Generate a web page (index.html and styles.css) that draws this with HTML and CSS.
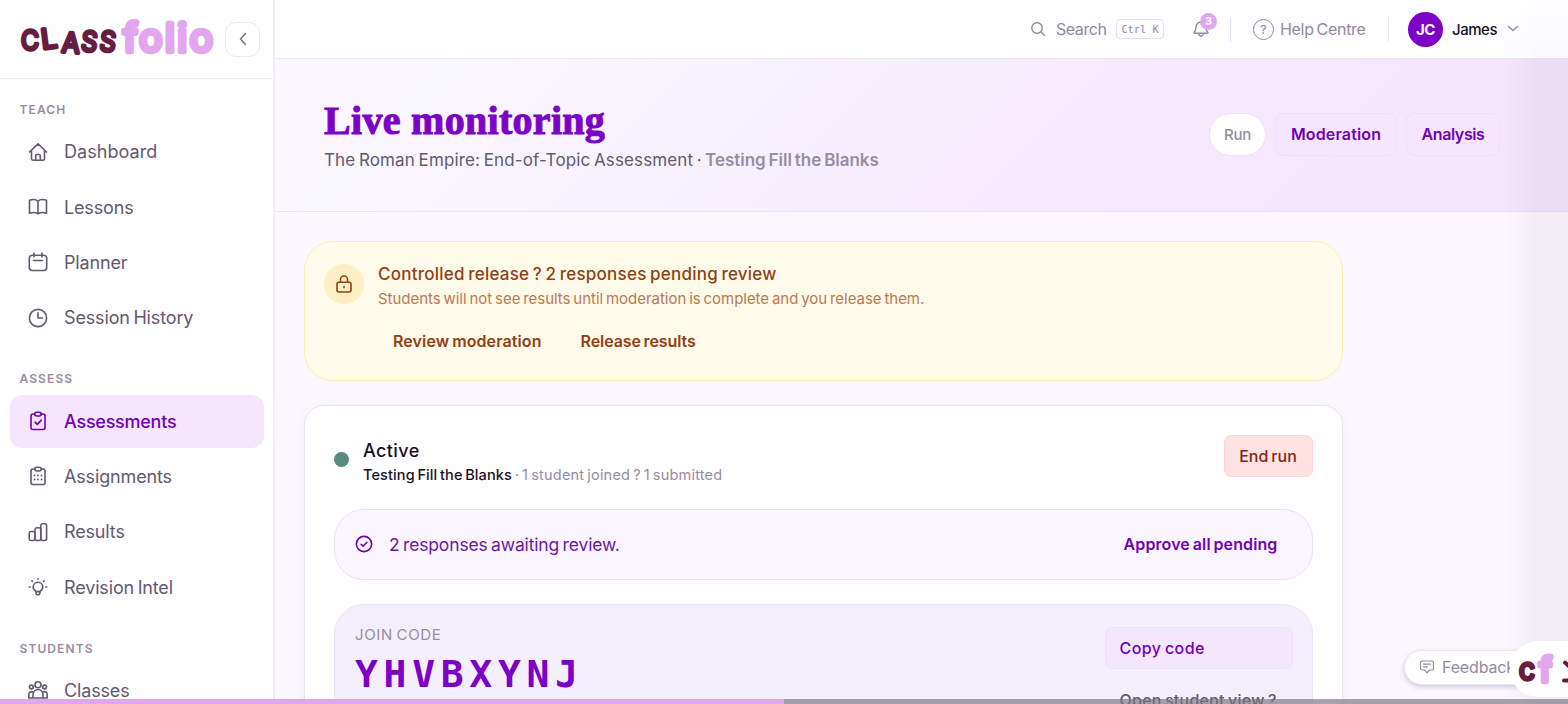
FILE: index.html
```html
<!DOCTYPE html>
<html lang="en">

<head>
  <meta charset="UTF-8">
  <meta name="viewport" content="width=device-width, initial-scale=1.0">
  <title>Live monitoring</title>
  <link rel="stylesheet" href="styles.css">
</head>

<body>

  <div class="app">

    <!-- Sidebar -->
    <aside class="sidebar">
      <div class="brand">
        <svg class="logo" width="196" height="44" viewBox="0 0 196 44">
          <g class="logo-class">
            <text x="2" y="32.500" textLength="18" lengthAdjust="spacingAndGlyphs">C</text>
            <text x="23" y="31.500" textLength="16" lengthAdjust="spacingAndGlyphs" transform="rotate(-7 30 30)">L</text>
            <text x="42.500" y="35.500" textLength="18" lengthAdjust="spacingAndGlyphs" transform="rotate(4 50 30)">A</text>
            <text x="62.500" y="34" textLength="16" lengthAdjust="spacingAndGlyphs" transform="rotate(6 69 24)">S</text>
            <text x="81" y="34" textLength="16" lengthAdjust="spacingAndGlyphs" transform="rotate(6 88 24)">S</text>
          </g>
          <text class="logo-folio" x="104" y="35" textLength="90" lengthAdjust="spacing">folio</text>
        </svg>
        <button class="collapse" aria-label="Collapse">
          <svg width="18" height="18" viewBox="0 0 18 18"><path d="M11.500 3.500 6.500 9l5 5.500" /></svg>
        </button>
      </div>

      <nav class="nav">
        <div class="nav-group">
          <h4>TEACH</h4>
          <a class="nav-item"><svg viewBox="0 0 20 20"><path d="M1.500 10 10 1.800l8.500 8.200M3.500 8.500v8a1.700 1.700 0 0 0 1.700 1.700h9.600a1.700 1.700 0 0 0 1.700-1.700v-8M7.700 18v-4.500a1 1 0 0 1 1-1h2.600a1 1 0 0 1 1 1V18" /></svg><span class="spaced">Dashboard</span></a>
          <a class="nav-item"><svg viewBox="0 0 20 20"><path d="M10 4.200C8 2.300 4.500 2.300 1.500 3.200v13c3-.9 6.500-.7 8.500.6 2-1.300 5.500-1.500 8.500-.6v-13c-3-.9-6.500-.9-8.500 1zm0 0v12.600" /></svg><span>Lessons</span></a>
          <a class="nav-item"><svg viewBox="0 0 20 20"><rect x="1.300" y="3.300" width="17.400" height="15.200" rx="3" /><path d="M6 1v4M14 1v4M5.500 8.500h9" /></svg><span>Planner</span></a>
          <a class="nav-item"><svg viewBox="0 0 20 20"><circle cx="10" cy="10" r="8.600" /><path d="M10 4.800V10h4.600" /></svg><span>Session History</span></a>
        </div>

        <div class="nav-group">
          <h4>ASSESS</h4>
          <a class="nav-item active"><svg viewBox="0 0 20 20"><path d="M6.800 3H5a2 2 0 0 0-2 2v11.500a2 2 0 0 0 2 2h10a2 2 0 0 0 2-2V5a2 2 0 0 0-2-2h-1.800M7 11.200l2.300 2.200 4-4.300" /><rect x="6.800" y="1.200" width="6.400" height="3.800" rx="1.900" /></svg><span>Assessments</span></a>
          <a class="nav-item"><svg viewBox="0 0 20 20"><path d="M6.800 3H5a2 2 0 0 0-2 2v11.500a2 2 0 0 0 2 2h10a2 2 0 0 0 2-2V5a2 2 0 0 0-2-2h-1.800" /><rect x="6.800" y="1.200" width="6.400" height="3.800" rx="1.900" /><path class="dots" d="M6.500 9.500h0M10 9.500h0M13.500 9.500h0M6.500 13.500h0M10 13.500h0M13.500 13.500h0" /></svg><span>Assignments</span></a>
          <a class="nav-item"><svg viewBox="0 0 20 20"><rect x="1.200" y="9.500" width="5.800" height="9" rx="2" /><rect x="7" y="5.800" width="5.800" height="12.700" rx="2" /><rect x="12.800" y="1.800" width="5.800" height="16.700" rx="2" /></svg><span>Results</span></a>
          <a class="nav-item"><svg viewBox="0 0 20 20"><path d="M8 15.500v-1.200c-1.800-1-2.800-2.400-2.800-4.200a4.800 4.800 0 0 1 9.600 0c0 1.800-1 3.200-2.800 4.200v1.200c0 1.200-.8 2.300-2 2.300s-2-1.100-2-2.300zM8 14.600h4M10 1.700v.6M3.900 3.900l.5.500M16.100 3.900l-.5.500M1.300 10h.9M17.800 10h.9" /></svg><span>Revision Intel</span></a>
        </div>

        <div class="nav-group">
          <h4>STUDENTS</h4>
          <a class="nav-item"><svg viewBox="0 0 20 20"><circle cx="10" cy="4.700" r="3" /><circle cx="3.400" cy="7" r="1.900" /><circle cx="16.600" cy="7" r="1.900" /><path d="M5 18v-3.500a5 5 0 0 1 10 0V18zM5 18H.8v-3.800c0-1.700 1.600-2.700 3.700-2.500M15 18h4.200v-3.800c0-1.700-1.600-2.700-3.700-2.500" /></svg><span>Classes</span></a>
        </div>
      </nav>
    </aside>

    <div class="main">

      <!-- Top bar -->
      <header class="topbar">
        <div class="search">
          <svg width="16" height="16" viewBox="0 0 16 16"><circle cx="7" cy="7" r="5.200" /><path d="m11 11 3.500 3.500" /></svg>
          <span>Search</span>
          <kbd>Ctrl K</kbd>
        </div>
        <div class="bell">
          <svg width="18" height="19" viewBox="0 0 18 19"><path d="M2 13.500c1.500-1.200 2-2.500 2-5.500a5 5 0 0 1 10 0c0 3 .5 4.300 2 5.500 0 .5-.3.800-.8.800H2.800c-.5 0-.8-.3-.8-.8zM6.500 14.500c.3 1.700 1.200 2.500 2.500 2.500s2.200-.8 2.500-2.500" /></svg>
          <span class="badge">3</span>
        </div>
        <div class="help">
          <span class="help-icon">?</span>
          <span>Help Centre</span>
        </div>
        <div class="user">
          <span class="avatar">JC</span>
          <span class="user-name">James</span>
          <svg width="12" height="8" viewBox="0 0 12 8"><path d="m1.500 1.500 4.500 4 4.500-4" /></svg>
        </div>
      </header>

      <!-- Page heading -->
      <section class="hero">
        <div>
          <h1>Live monitoring</h1>
          <p class="subtitle"><span>The Roman Empire: End-of-Topic Assessment</span> · <b>Testing Fill the Blanks</b></p>
        </div>
        <div class="tabs">
          <button class="tab current">Run</button>
          <button class="tab moderation">Moderation</button>
          <button class="tab analysis">Analysis</button>
        </div>
      </section>

      <div class="content">
        <section class="notice">
          <span class="lock">
            <svg width="20" height="20" viewBox="0 0 20 20"><rect x="3" y="8.200" width="14" height="9.800" rx="2" /><path d="M6.500 8V5.500a3.500 3.500 0 0 1 7 0V8M10 12.500v1.200" /></svg>
          </span>
          <div>
            <h2>Controlled release ? 2 responses pending review</h2>
            <p>Students will not see results until moderation is complete and you release them.</p>
            <div class="notice-actions">
              <a class="spaced">Review moderation</a>
              <a>Release results</a>
            </div>
          </div>
        </section>

        <section class="card">
          <div class="status">
            <span class="status-dot"></span>
            <div class="status-text">
              <h2>Active</h2>
              <p><b>Testing Fill the Blanks</b> <span>· 1 student joined ? 1 submitted</span></p>
            </div>
            <button class="end-run">End run</button>
          </div>

          <div class="review">
            <svg width="18" height="18" viewBox="0 0 18 18"><circle cx="9" cy="9" r="7.600" /><path d="m6.200 9.300 2 1.800 3.700-3.800" /></svg>
            <span>2 responses awaiting review.</span>
            <a class="spaced">Approve all pending</a>
          </div>

          <div class="join">
            <div>
              <div class="join-label">JOIN CODE</div>
              <div class="join-code">YHVBXYNJ</div>
            </div>
            <div class="join-actions">
              <button class="copy">Copy code</button>
              <a>Open student view ?</a>
            </div>
          </div>
        </section>
      </div>
    </div>
  </div>

  <!-- Floating widgets -->
  <div class="edge-shade"></div>
  <button class="feedback">
    <svg width="16" height="16" viewBox="0 0 16 16"><path d="M3 2h10a1.500 1.500 0 0 1 1.500 1.500v6A1.500 1.500 0 0 1 13 11h-2.500L8 13.800 5.500 11H3a1.500 1.500 0 0 1-1.500-1.500v-6A1.500 1.500 0 0 1 3 2zM4.500 5.200h7M4.500 7.800h4" /></svg>
    <span>Feedback</span>
  </button>
  <div class="launcher">
    <svg width="60" height="56" viewBox="0 0 60 56">
      <g class="logo-class"><text x="9" y="38.500" textLength="16" lengthAdjust="spacingAndGlyphs">c</text></g>
      <text class="logo-folio" x="29" y="40.500" textLength="13" lengthAdjust="spacingAndGlyphs">f</text>
      <path class="launcher-mark" d="m55 21.500 6 5.500M54 39.500h8l-2-3" />
    </svg>
  </div>
  <div class="progress"><div class="progress-fill"></div></div>

</body>

</html>
```
FILE: styles.css
```css
/* Global Styles */
* {
  margin: 0;
  padding: 0;
  box-sizing: border-box;
}

body {
  width: 100%;
  height: 100vh;
  overflow: hidden;
  background: #faf8fe;
  color: #1a1024;
  font-family: "Inter", sans-serif;
  font-size: 16px;
  word-spacing: -1.300px;
}

svg {
  display: block;
  flex: none;
  fill: none;
  stroke: currentColor;
  stroke-width: 1.6;
  stroke-linecap: round;
  stroke-linejoin: round;
}

button {
  font: inherit;
  word-spacing: inherit;
  border: 0;
}

span, a, b {
  white-space: nowrap;
}

.app {
  display: flex;
  height: 100vh;
  overflow: hidden;
}

/* Sidebar */
.sidebar {
  flex: none;
  width: 275px;
  height: 100vh;
  overflow: hidden;
  background: #fefdff;
  border-right: 2px solid #f2eef9;
}

.brand {
  height: 79px;
  display: flex;
  align-items: center;
  padding-left: 19px;
  border-bottom: 1px solid #eeeaf7;
}

.logo-class text {
  font: 400 27.500px "Inter", sans-serif;
  fill: #651d42;
  stroke: #651d42;
  stroke-width: 3.500;
}

.logo-folio {
  font: 500 39px "Inter", sans-serif;
  fill: #e2a6ef;
  stroke: #e2a6ef;
  stroke-width: 4.500;
}

.collapse {
  width: 35px;
  height: 35px;
  margin-left: 10px;
  display: flex;
  align-items: center;
  justify-content: center;
  border: 1px solid #ece8f5;
  border-radius: 11px;
  background: #fff;
  color: #7c7488;
}

.nav {
  padding: 14px 9px 0 10px;
}

.nav-group {
  margin-bottom: 18px;
}

.nav-group h4 {
  height: 32.400px;
  padding-left: 9.500px;
  line-height: 33px;
  font-size: 12px;
  font-weight: 600;
  letter-spacing: 1.100px;
  color: #968da3;
}

.nav-item {
  height: 53px;
  margin-bottom: 2.300px;
  padding-left: 18px;
  display: flex;
  align-items: center;
  gap: 16px;
  border-radius: 12px;
  font-size: 18px;
  letter-spacing: -.150px;
  color: #625a70;
}

.nav-item:last-child {
  margin-bottom: 0;
}

.nav-item svg {
  width: 20px;
  height: 20px;
}

.nav-item .spaced {
  letter-spacing: .050px;
}

.nav-item .dots {
  stroke-width: 1.800;
}

.nav-item.active {
  background: #f5e6fe;
  color: #7200b5;
  font-weight: 500;
  letter-spacing: -.250px;
}

/* Top bar */
.main {
  flex: 1;
  min-width: 0;
}

.topbar {
  height: 59px;
  display: flex;
  align-items: center;
  justify-content: flex-end;
  padding-right: 49px;
  border-bottom: 1px solid #ece6f5;
  background: #fefdff;
  color: #9389a1;
}

.search {
  display: flex;
  align-items: center;
}

.search span {
  margin-left: 10px;
  width: 51px;
  letter-spacing: -.450px;
}

.search kbd {
  width: 48px;
  height: 20px;
  margin-left: 9px;
  border: 1px solid #e6e0ef;
  border-radius: 4px;
  font: 10.300px/19px "DejaVu Sans Mono", monospace;
  word-spacing: 0;
  text-align: center;
}

.bell {
  position: relative;
  margin-left: 28px;
  width: 39px;
  height: 25px;
  padding-top: 2px;
  border-right: 1px solid #e6def1;
}

.bell svg, .search svg, .user svg {
  stroke-width: 1.400;
}

.badge {
  position: absolute;
  top: -4px;
  left: 8px;
  width: 17px;
  height: 17px;
  border-radius: 50%;
  background: #e2a6ef;
  color: #fff;
  font-size: 11px;
  font-weight: 700;
  line-height: 17px;
  text-align: center;
}

.help {
  height: 25px;
  display: flex;
  align-items: center;
  gap: 6px;
  margin-left: 22px;
  padding-right: 22px;
  border-right: 1px solid #eee8f6;
}

.help-icon {
  width: 21px;
  height: 21px;
  border: 1px solid #9389a1;
  border-radius: 50%;
  font-size: 12px;
  font-weight: 500;
  line-height: 19px;
  text-align: center;
}

.help > span:last-child {
  width: 86px;
  letter-spacing: -.300px;
}

.user {
  display: flex;
  align-items: center;
  margin-left: 19px;
}

.avatar {
  width: 35px;
  height: 35px;
  border-radius: 50%;
  background: #7d00c7;
  color: #fff;
  font-weight: 700;
  font-size: 15px;
  line-height: 35px;
  letter-spacing: -.500px;
  text-align: center;
}

.user-name {
  width: 45px;
  margin: 0 10px 0 9px;
  color: #1a1024;
  font-size: 15px;
  font-weight: 500;
  letter-spacing: -.450px;
}

/* Page heading */
.hero {
  height: 153px;
  display: flex;
  align-items: center;
  justify-content: space-between;
  padding: 0 68px 2px 49px;
  border-bottom: 1px solid #e9e3f5;
  background: linear-gradient(135deg, #faf8fe 10%, #f6edfd 50%, #f5e6fd 80%);
}

h1 {
  margin-top: 2px;
  font: 700 40px/44px "Liberation Serif", serif;
  letter-spacing: .300px;
  word-spacing: 0;
  color: #7d00c7;
  -webkit-text-stroke: 1px #7d00c7;
}

.subtitle {
  height: 22px;
  margin-top: 6px;
  font-size: 17px;
  line-height: 22px;
  color: #625a70;
  white-space: nowrap;
}

.subtitle span {
  letter-spacing: .130px;
}

.subtitle b {
  font-weight: 600;
  letter-spacing: -.030px;
  color: #968da3;
}

.tabs {
  display: flex;
  gap: 9px;
}

.tab {
  height: 43px;
  border: 1px solid #efdffa;
  border-radius: 8px;
  background: #f5e6fd;
  color: #7200b5;
  font-weight: 600;
}

.tab.current {
  width: 57px;
  border-radius: 22px;
  background: #fff;
  color: #968da3;
  font-size: 15px;
  font-weight: 500;
  letter-spacing: -.200px;
}

.tab.moderation {
  width: 122px;
  letter-spacing: .150px;
}

.tab.analysis {
  width: 94px;
  letter-spacing: -.400px;
}

/* Content */
.content {
  padding: 29px 0 0 29px;
  width: 1067.500px;
}

.notice {
  height: 140px;
  display: flex;
  gap: 14px;
  padding: 21px 19px;
  border: 1px solid #fbeeb0;
  border-radius: 29px;
  background: #fffbea;
  color: #923f12;
}

.lock {
  width: 40px;
  height: 40px;
  margin-top: 1px;
  display: flex;
  align-items: center;
  justify-content: center;
  border-radius: 50%;
  background: #fef0c4;
}

.notice h2 {
  font-size: 17px;
  font-weight: 500;
  line-height: 22px;
  letter-spacing: .240px;
}

.notice p {
  margin-top: 3px;
  font-size: 15px;
  line-height: 22px;
  letter-spacing: -.030px;
  color: #bb7854;
  white-space: nowrap;
}

.notice-actions {
  display: flex;
  gap: 39px;
  padding: 20px 15px;
  font-weight: 600;
  line-height: 22px;
}

.notice-actions a {
  letter-spacing: -.090px;
}

.notice-actions .spaced, .review .spaced {
  letter-spacing: .110px;
}

.card {
  height: 400px;
  margin-top: 24px;
  padding: 29px;
  border: 1px solid #eae4f5;
  border-radius: 20px;
  background: #fefdff;
  box-shadow: 0 3px 14px rgba(90, 30, 140, .05);
}

.status {
  height: 43px;
  display: flex;
  align-items: flex-start;
}

.status-dot {
  width: 15px;
  height: 15px;
  margin: 17px 14px 0 0;
  border-radius: 50%;
  background: #5a8b7d;
}

.status-text {
  flex: 1;
  padding-top: 5px;
}

.status h2 {
  font-size: 18px;
  font-weight: 500;
  line-height: 22px;
  letter-spacing: .400px;
}

.status p {
  font-size: 14.500px;
  line-height: 26px;
  color: #968da3;
  white-space: nowrap;
}

.status p span {
  letter-spacing: .210px;
}

.status b {
  color: #1a1024;
  font-weight: 500;
  letter-spacing: .110px;
}

.end-run {
  width: 89px;
  height: 42px;
  padding-bottom: 1px;
  border: 1px solid #fcd6d8;
  border-radius: 7px;
  background: #fee1e1;
  color: #852617;
  font-weight: 500;
}

.review {
  height: 71px;
  margin-top: 31px;
  display: flex;
  align-items: center;
  padding: 0 34px 1px 20px;
  border: 1px solid #ebe0f7;
  border-radius: 30px;
  background: #faf5fe;
  color: #7200b5;
}

.review span {
  margin-left: 16px;
  color: #6a1a9c;
  font-size: 17.500px;
  letter-spacing: -.150px;
}

.review a {
  margin-left: auto;
  font-weight: 600;
}

.join {
  height: 200px;
  margin-top: 24px;
  display: flex;
  justify-content: space-between;
  padding: 21px 19px 0 20px;
  border: 1px solid #eae4f6;
  border-radius: 30px;
  background: #f4effc;
}

.join-label {
  font-size: 15px;
  line-height: 18px;
  letter-spacing: .650px;
  color: #968da3;
}

.join-code {
  margin-top: 1px;
  font: 700 38px/58px "DejaVu Sans Mono", monospace;
  letter-spacing: 5.700px;
  color: #7d00c7;
}

.join-actions {
  width: 188px;
  padding-top: 1px;
  font-weight: 500;
  color: #625a70;
}

.copy {
  width: 100%;
  height: 42px;
  margin-bottom: 21px;
  padding-left: 14px;
  border: 1px solid #efe0fa;
  border-radius: 7px;
  background: #f4e7fd;
  color: #7200b5;
  letter-spacing: .450px;
  text-align: left;
}

.join-actions a {
  display: block;
  padding-left: 15px;
  line-height: 20px;
  letter-spacing: .260px;
}

/* Floating widgets */
.edge-shade {
  position: absolute;
  top: 0;
  right: 0;
  width: 68px;
  height: 100vh;
  background: linear-gradient(to right, rgba(70, 50, 80, 0), rgba(70, 50, 80, .02) 30%, rgba(70, 50, 80, .05) 52%);
  -webkit-mask-image: linear-gradient(rgba(0, 0, 0, 0), rgba(0, 0, 0, .4) 58px, #000 60px);
  mask-image: linear-gradient(rgba(0, 0, 0, 0), rgba(0, 0, 0, .4) 58px, #000 60px);
}

.feedback {
  position: absolute;
  left: 1404px;
  top: 650px;
  width: 140px;
  height: 35px;
  display: flex;
  align-items: center;
  gap: 7px;
  padding: 0 0 1px 14px;
  border: 1px solid #e9e4ef;
  border-radius: 18px;
  background: #fff;
  box-shadow: 0 2px 5px rgba(50, 20, 70, .2);
  color: #9389a1;
  letter-spacing: -.150px;
}

.feedback svg {
  stroke-width: 1.200;
}

.launcher {
  position: absolute;
  left: 1510px;
  top: 641px;
  width: 58px;
  height: 56px;
  overflow: hidden;
  border-radius: 28px 0 0 28px;
  background: #fff;
}

.launcher .logo-class text {
  font-size: 30px;
}

.launcher .logo-folio {
  font-size: 35px;
}

.launcher-mark {
  stroke: #651d42;
  stroke-width: 4;
}

.progress {
  position: absolute;
  left: 0;
  bottom: 0;
  width: 100%;
  height: 5px;
  background: rgba(120, 115, 125, .65);
}

.progress-fill {
  width: 50%;
  height: 5px;
  background: #e2a6ef;
}
```
